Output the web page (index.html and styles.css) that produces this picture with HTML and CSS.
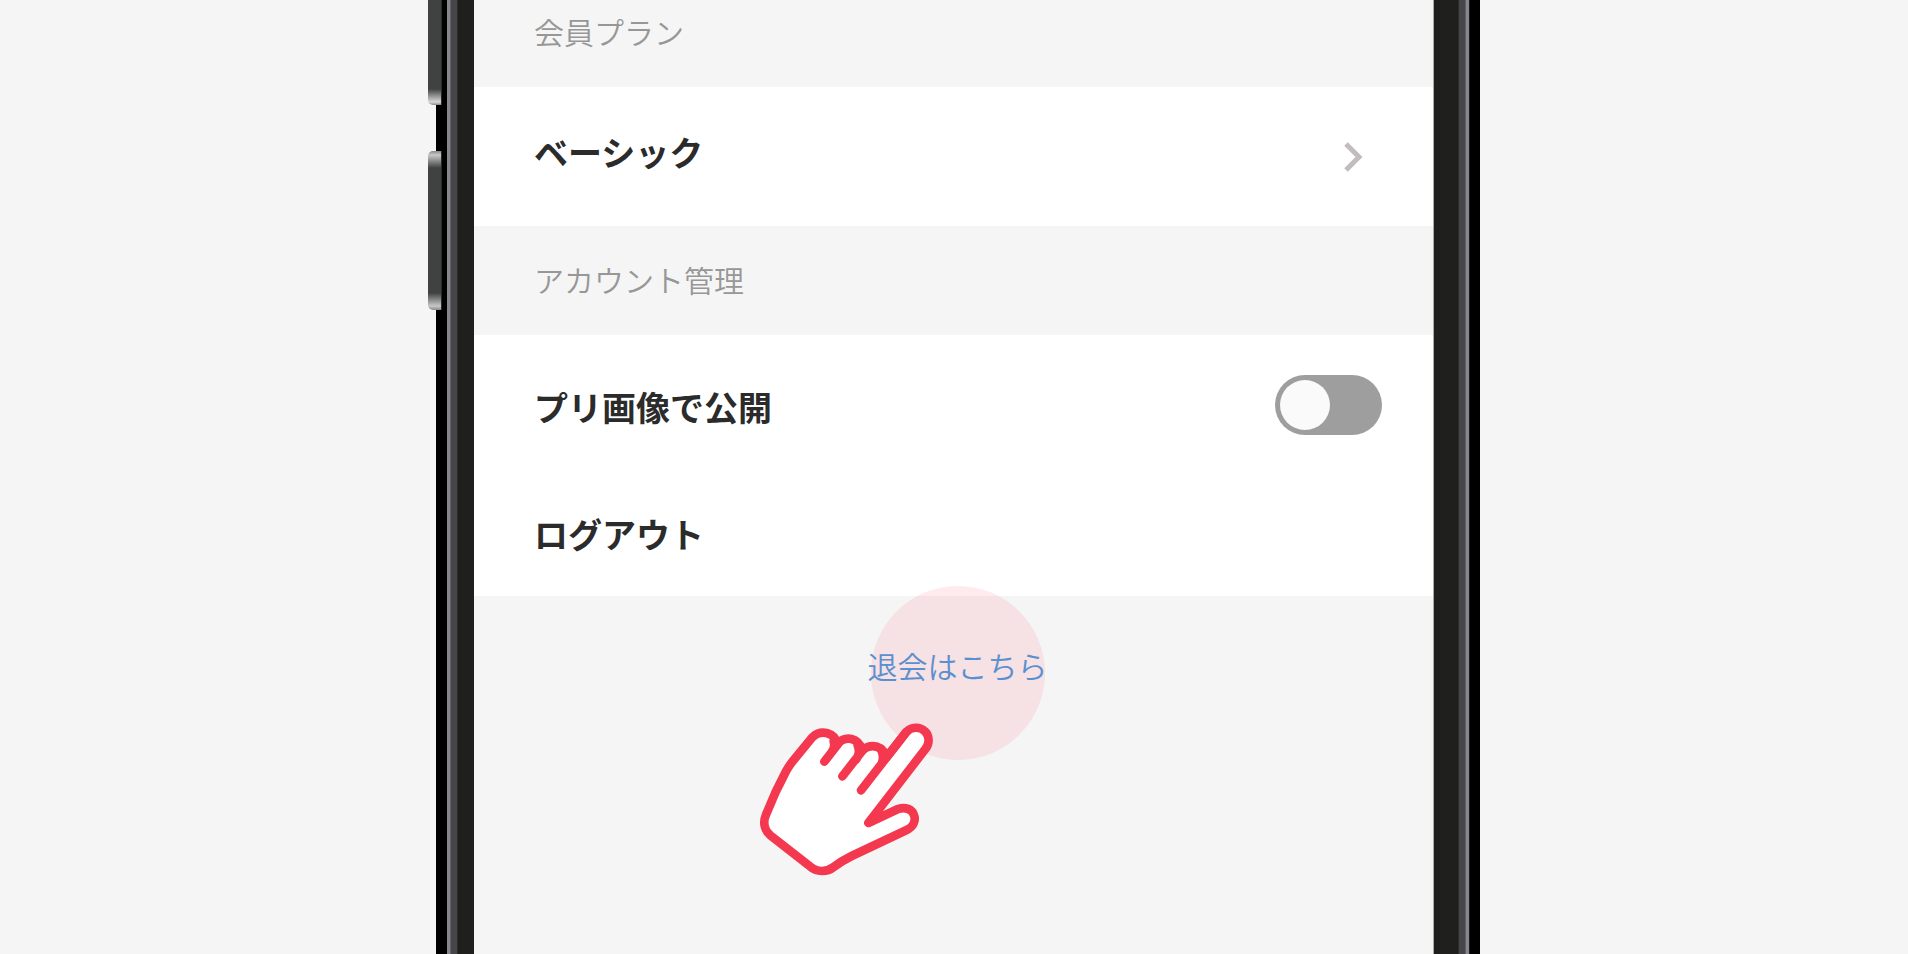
FILE: index.html
```html
<!DOCTYPE html>
<html lang="ja">
<head>
    <meta charset="UTF-8">
    <meta name="viewport" content="width=device-width, initial-scale=1.0">
    <title>アカウント管理</title>
    <link rel="stylesheet" href="styles.css">
</head>
<body>

    <div class="phone">
        <div class="frame frame-left">
            <span class="side-key key-up"></span>
            <span class="side-key key-down"></span>
        </div>

        <main class="screen">
            <!-- Plan -->
            <h2 class="section-title">会員プラン</h2>
            <div class="group">
                <a href="#" class="row">
                    <span class="plan-name">ベーシック</span>
                    <svg class="chevron" viewBox="0 0 20 32" aria-hidden="true">
                        <path d="M2 3 L15 16 L2 29"/>
                    </svg>
                </a>
            </div>

            <!-- Account -->
            <h2 class="section-title">アカウント管理</h2>
            <div class="group">
                <div class="row">
                    <label for="puri" class="toggle-label">プリ画像で公開</label>
                    <input type="checkbox" id="puri" class="toggle">
                </div>
                <button type="button" class="row row-last">ログアウト</button>
            </div>

            <!-- Leave -->
            <div class="leave">
                <div class="tap">
                    <a href="#" class="leave-link">退会はこちら</a>
                    <svg class="hand" viewBox="0 0 660 570" aria-hidden="true">
                        <path class="palm" d="M217 112 L158 184 Q147 198 139 212 Q105 275 78 344 C67 370 75 392 91 406 L211 500 C229 517 261 517 281 501 Q303 484 335 468 L500 390 C520 380 527 364 523 348 C517 326 495 320 474 327 L385 369 L557 146 C569 130 569 108 555 94 C539 79 514 80 499 96 L438 174 C431 138 395 128 367 150 C354 113 319 106 291 131 C285 99 244 86 217 112 Z"/>
                        <path class="fingers" d="M253 185 L298 127 M274 158 Q287 143 281 124 M307 229 L371 147 M347 180 Q363 160 353 136 M363 271 L499 96 M424 193 Q434 172 424 151"/>
                    </svg>
                </div>
            </div>
        </main>

        <div class="frame frame-right"></div>
    </div>

</body>
</html>
```
FILE: styles.css
```css
/* General Reset */
* { margin: 0; padding: 0; box-sizing: border-box; }
body { font-family: "Noto Sans CJK JP", sans-serif; background-color: #f5f5f5; color: #2b2b2b; padding-left: 8px; }
a { color: inherit; text-decoration: none; }

/* Phone */
.phone { display: flex; max-width: 1044px; height: 100vh; margin: 0 auto; }
.frame { position: relative; flex: none; }
.frame-left { width: 38px; background: linear-gradient(to right, #000 11px, #87868e 11px 14px, #626167 14px 15px, #464548 15px 21px, #2c2c2c 21px 22px, #1f1f1d 22px); }
.frame-right { width: 47px; background: linear-gradient(to right, #aaa 1px, #1f1f1d 1px 25px, #2c2c2c 25px 26px, #464548 26px 32px, #626167 32px 33px, #87868e 33px 36px, #1a1a1c 36px 37px, #000 37px); }

/* Volume keys sit over the outer edge */
.side-key { position: absolute; left: -8px; width: 14px; border-right: 1px solid #2a2c2b; }
.key-up { top: 0; height: 105px; border-bottom-left-radius: 5px; background: linear-gradient(to top, #888 0, #d8d8d8 3px, #b5b5b5 6px, #3f4240 16px); }
.key-down { top: 151px; height: 159px; border-radius: 5px 0 0 5px; background: linear-gradient(to bottom, #888 0, #c8c8c8 4px, #3f4240 17px, #3f4240 142px, #c8c8c8 155px, #888 159px); }

/* Screen, scrolled a little past the first title */
.screen { flex: 1; min-width: 0; overflow: hidden; }
.screen .section-title:first-child { margin-top: -22px; }
.section-title { display: flex; align-items: center; height: 109px; padding: 0 60px 4px; font-size: 30px; font-weight: 350; color: #979797; }
.group { background-color: #fff; }
.row { display: flex; justify-content: space-between; align-items: center; width: 100%; height: 139px; padding: 0 51px 0 60px; border: none; background: none; font-family: inherit; font-size: 34px; font-weight: 700; color: inherit; cursor: pointer; }
.row-last { height: 122px; padding-bottom: 4px; }
.plan-name { padding-bottom: 10px; }
.toggle-label { padding-top: 4px; }
.chevron { width: 20px; height: 32px; margin-right: 18px; fill: none; stroke: #c2bcbc; stroke-width: 5; }

/* Toggle */
.toggle { appearance: none; display: flex; align-items: center; width: 107px; height: 60px; padding: 5px; border-radius: 30px; background-color: #9e9e9e; cursor: pointer; }
.toggle::before { content: ""; width: 50px; height: 50px; border-radius: 50%; background-color: #fafafa; }
.toggle:checked { justify-content: flex-end; background-color: #f4384f; }

/* Leave link with tap marker */
.leave { display: flex; justify-content: center; padding-left: 8px; }
.tap { position: relative; display: flex; justify-content: center; align-items: center; width: 174px; height: 174px; margin-top: -10px; padding-bottom: 16px; border-radius: 50%; background-color: rgba(255, 48, 80, 0.1); }
.leave-link { font-size: 30px; font-weight: 350; color: #5a8fd0; white-space: nowrap; }
.hand { position: absolute; left: -131px; top: 114px; width: 220px; height: 190px; stroke: #f4384f; stroke-width: 26; stroke-linecap: round; stroke-linejoin: round; }
.palm { fill: #fff; }
.fingers { fill: none; }
```
